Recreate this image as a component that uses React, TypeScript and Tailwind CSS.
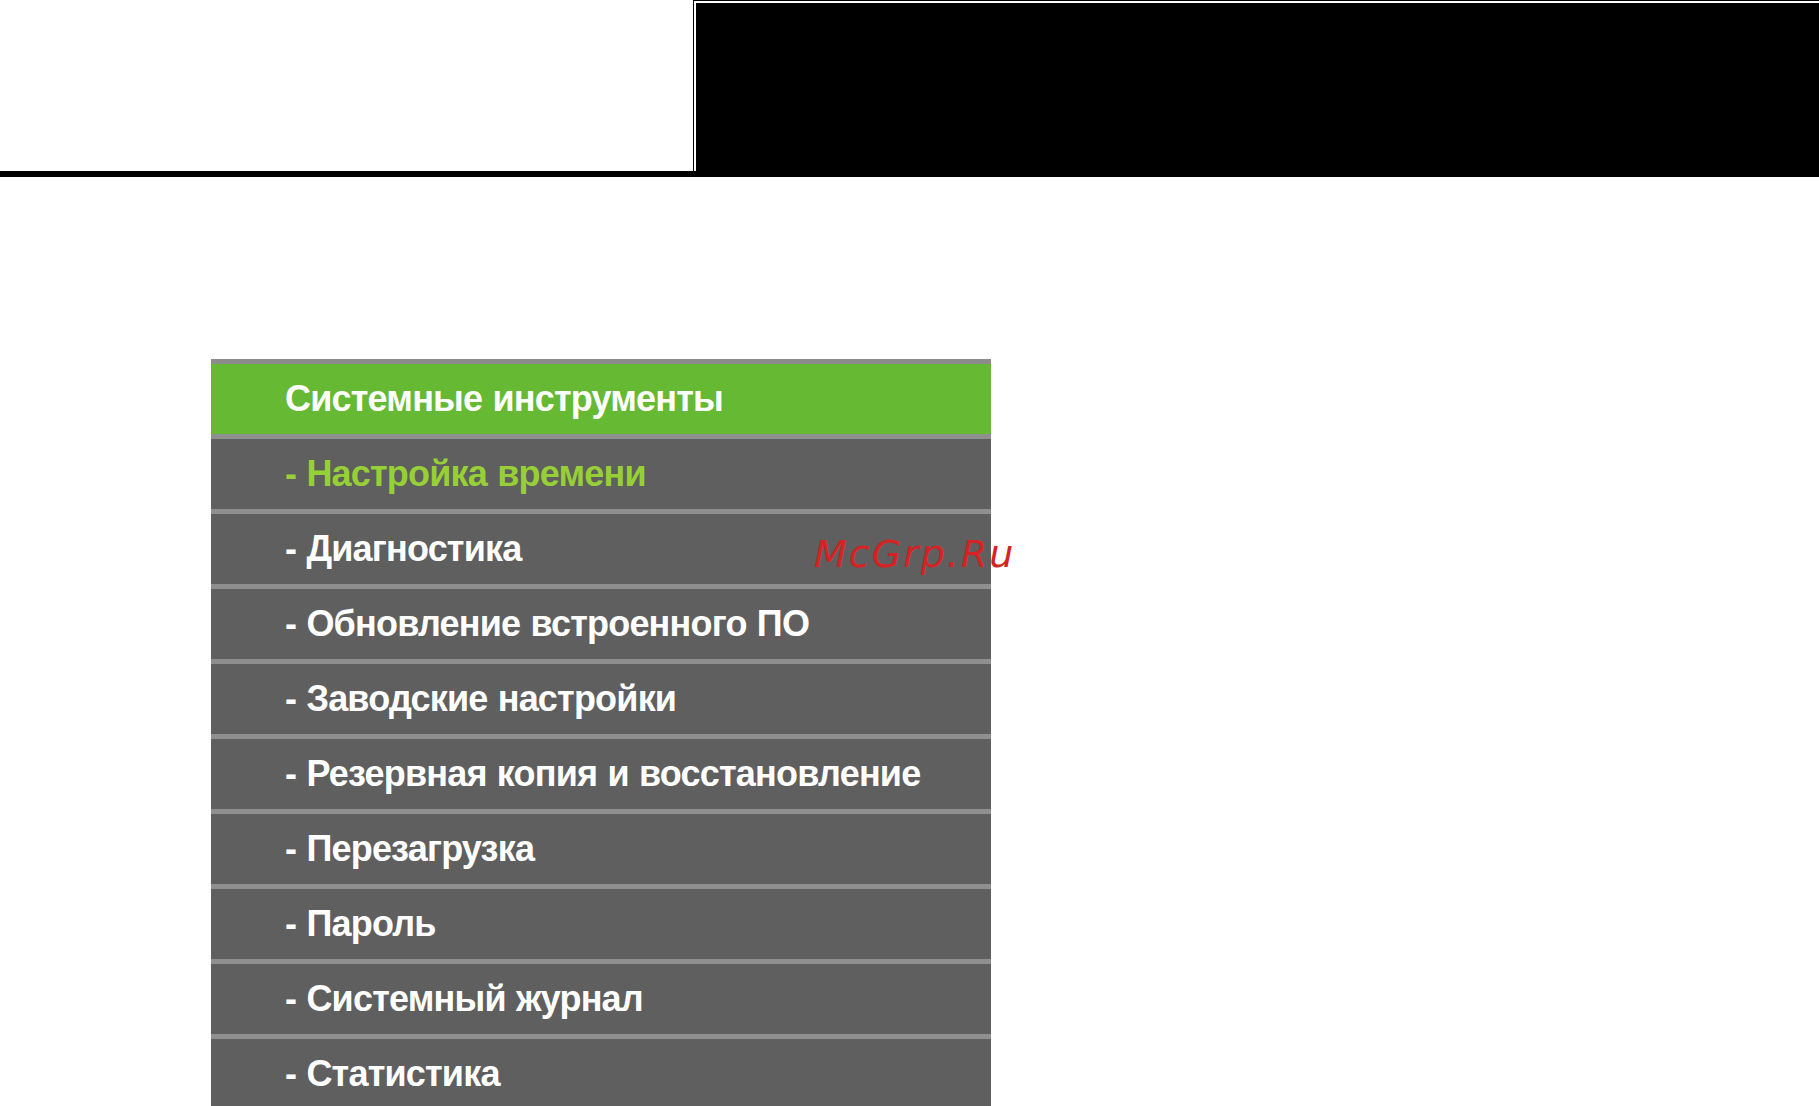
const items = [
  { label: 'Системные инструменты', kind: 'head' },
  { label: '- Настройка времени', kind: 'active' },
  { label: '- Диагностика', kind: 'item' },
  { label: '- Обновление встроенного ПО', kind: 'item' },
  { label: '- Заводские настройки', kind: 'item' },
  { label: '- Резервная копия и восстановление', kind: 'item' },
  { label: '- Перезагрузка', kind: 'item' },
  { label: '- Пароль', kind: 'item' },
  { label: '- Системный журнал', kind: 'item' },
  { label: '- Статистика', kind: 'item' },
];

function App() {
  return (
    <div className="relative w-[1819px] h-[1106px] overflow-hidden bg-white font-['Liberation_Sans',Arial,sans-serif]">
      {/* header */}
      <div className="flex h-[171px]">
        <div className="w-[693px] bg-white" />
        <div className="flex-1 border-l border-t border-black bg-white pl-[2px] pt-[2px]">
          <div className="h-full bg-black" />
        </div>
      </div>
      <div className="h-[6px] bg-black" />

      {/* menu */}
      <div className="ml-[211px] mt-[182px] w-[780px] border-t-[5px] border-[#8c8c8c]">
        {items.map((it) => (
          <div
            key={it.label}
            className={
              'flex h-[75px] items-center border-b-[5px] border-[#8f8f8f] pl-[74px] text-[36px] font-bold leading-none tracking-[-0.8px] [word-spacing:1px] ' +
              (it.kind === 'head'
                ? 'bg-[#66b933] text-white'
                : it.kind === 'active'
                ? 'bg-[#5f5f5f] text-[#96d036]'
                : 'bg-[#5f5f5f] text-white')
            }
          >
            {it.label}
          </div>
        ))}
      </div>

      {/* watermark */}
      <div className="absolute left-[814px] top-[535px] text-[38px] leading-none italic tracking-[2px] text-[#d62222] font-['DejaVu_Sans',sans-serif]">
        McGrp.Ru
      </div>
    </div>
  );
}

export default App;
